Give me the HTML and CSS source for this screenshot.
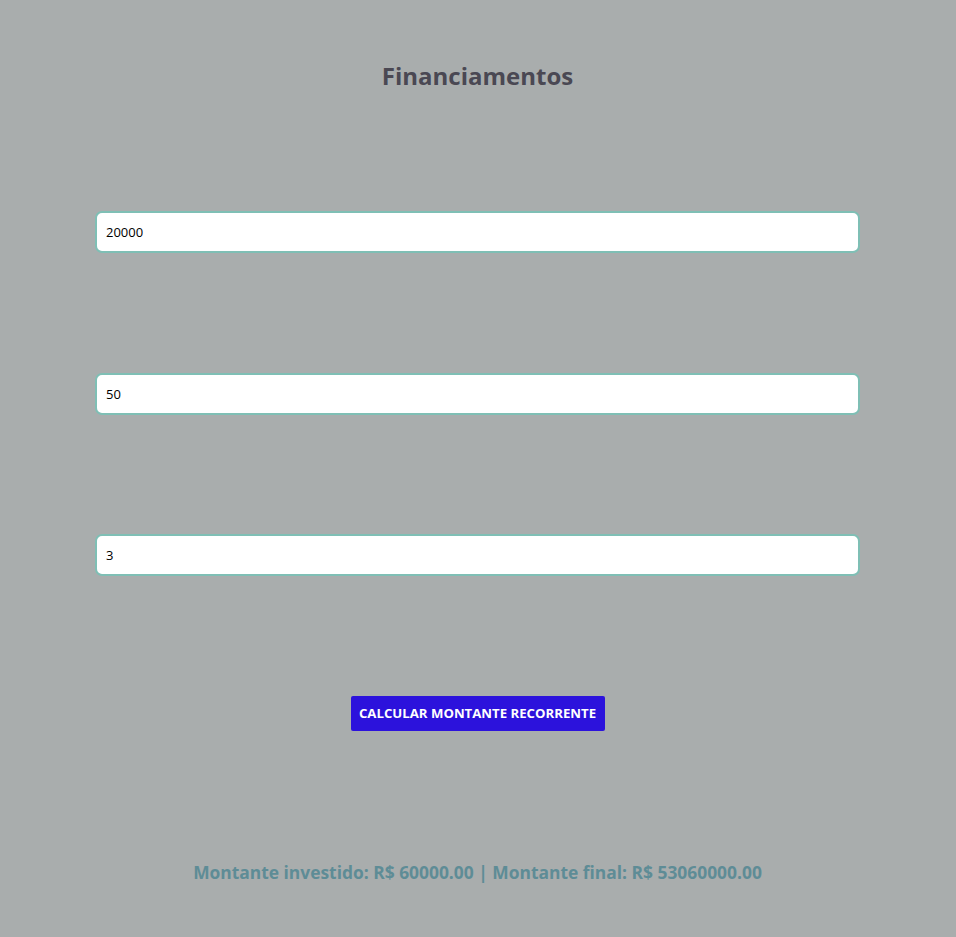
FILE: index.html
```html
<!DOCTYPE html>
<html lang="pt">
<head>
<meta charset="utf-8">
<title>Financiamentos</title>
<link rel="stylesheet" href="styles.css">
</head>
<body>
<main class="page">
  <h1 class="title">Financiamentos</h1>
  <form class="form">
    <div class="field"><input class="input" type="text" value="20000"></div>
    <div class="field"><input class="input" type="text" value="50"></div>
    <div class="field"><input class="input" type="text" value="3"></div>
    <div class="actions"><button type="button" class="btn">CALCULAR MONTANTE RECORRENTE</button></div>
  </form>
  <p class="result">Montante investido: R$ 60000.00 | Montante final: R$ 53060000.00</p>
</main>
</body>
</html>
```
FILE: styles.css
```css
html, body {
  margin: 0;
  padding: 0;
  background: #a9adad;
  font-family: "Open Sans", "Noto Sans", sans-serif;
}
.page {
  width: 765px;
  margin: 0 auto;
  padding-top: 58px;
  padding-right: 1px;
  display: flex;
  flex-direction: column;
  align-items: stretch;
}
.title {
  margin: 0;
  text-align: center;
  font-size: 24px;
  font-weight: 700;
  color: #4a4853;
  line-height: 36px;
}
.form {
  display: flex;
  flex-direction: column;
  margin-top: 117px;
}
.field {
  height: 42px;
  margin-bottom: 119.5px;
}
.input {
  box-sizing: border-box;
  width: 100%;
  height: 42px;
  border: 2px solid #7fbfb5;
  border-radius: 7px;
  background: #fff;
  padding: 0 9px;
  font-family: "Open Sans", "Noto Sans", sans-serif;
  font-size: 13px;
  color: #000;
  outline: none;
}
.actions {
  display: flex;
  justify-content: center;
}
.btn {
  width: 254px;
  height: 35px;
  background: #2c12dc;
  color: #fff;
  border: none;
  border-radius: 2px;
  font-family: "Open Sans", "Noto Sans", sans-serif;
  font-weight: 700;
  font-size: 13.2px;
  padding: 0;
  white-space: nowrap;
}
.result {
  margin: 128px 0 0;
  text-align: center;
  font-size: 17.4px;
  font-weight: 700;
  color: #5e8c96;
  line-height: 26px;
}
```
